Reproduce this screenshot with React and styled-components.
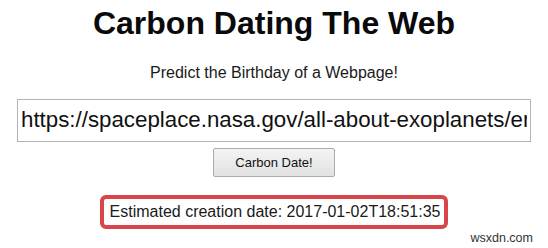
import React from "react";
import styled, { createGlobalStyle } from "styled-components";

const Global = createGlobalStyle`
  html, body { margin: 0; padding: 0; background: #ffffff; }
  body { font-family: "Liberation Sans", Arial, sans-serif; color: #111; }
`;

const Page = styled.div`
  position: relative;
  width: 548px;
  height: 248px;
  overflow: hidden;
  background: #fff;
  display: flex;
  flex-direction: column;
  align-items: center;
`;

const Title = styled.h1`
  margin: 5px 0 0;
  font-size: 32px;
  line-height: 37px;
  font-weight: 700;
  color: #0a0a0a;
`;

const Subtitle = styled.p`
  margin: 22px 0 0;
  font-size: 16px;
  line-height: 18px;
  color: #1a1a1a;
`;

const UrlInput = styled.input`
  box-sizing: border-box;
  margin-top: 17px;
  width: 514px;
  height: 43px;
  padding: 0 3px 2px 3px;
  border: 1px solid #b4b4b4;
  font-family: "Liberation Sans", Arial, sans-serif;
  font-size: 22.3px;
  color: #111;
  outline: none;
  background: #fff;
`;

const Button = styled.button`
  box-sizing: border-box;
  margin-top: 6px;
  width: 122px;
  height: 29px;
  border: 1px solid #acacac;
  border-radius: 2px;
  background: linear-gradient(#f3f3f3, #e2e2e2);
  font-family: "Liberation Sans", Arial, sans-serif;
  font-size: 13px;
  color: #111;
  padding: 0;
`;

const Result = styled.div`
  margin-top: 18px;
  box-sizing: border-box;
  border: 4px solid #d8454b;
  border-radius: 6px;
  padding: 4px 4px 4px 6px;
  font-size: 16px;
  line-height: 18px;
  color: #1a1a1a;
  white-space: nowrap;
`;

const Watermark = styled.div`
  position: absolute;
  right: 15px;
  bottom: 2px;
  font-size: 12.5px;
  line-height: 15px;
  color: #333;
`;

export default function App() {
  return (
    <>
      <Global />
      <Page>
        <Title>Carbon Dating The Web</Title>
        <Subtitle>Predict the Birthday of a Webpage!</Subtitle>
        <UrlInput
          type="text"
          readOnly
          value="https://spaceplace.nasa.gov/all-about-exoplanets/en/"
        />
        <Button>Carbon Date!</Button>
        <Result>Estimated creation date: 2017-01-02T18:51:35</Result>
        <Watermark>wsxdn.com</Watermark>
      </Page>
    </>
  );
}
